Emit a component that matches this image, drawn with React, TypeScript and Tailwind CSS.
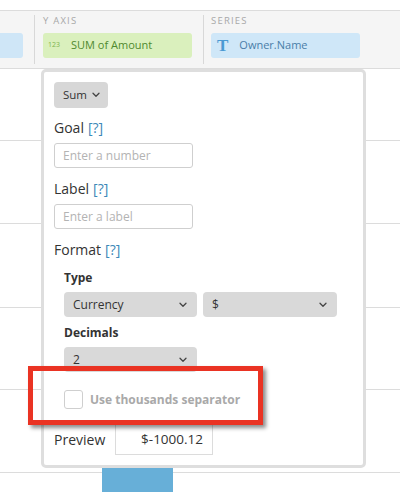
import React from "react";

const Chevron = ({ className = "" }: { className?: string }) => (
  <svg width="8" height="6" viewBox="0 0 8 6" className={className} fill="none">
    <path d="M1 1.3 L4 4.3 L7 1.3" stroke="#444" strokeWidth="1.3" strokeLinecap="round" strokeLinejoin="round" />
  </svg>
);

const Select = ({ label, w }: { label: string; w: string }) => (
  <div className={`${w} h-[25px] bg-[#d9d9d9] rounded-[4px] flex items-center justify-between pl-[9px] pr-[10px] text-[12px] text-[#333]`}>
    <span>{label}</span>
    <Chevron />
  </div>
);

const Help = () => <span className="text-[#3d88b8] ml-[4px]">[?]</span>;

export default function App() {
  return (
    <div
      className="relative w-[400px] h-[492px] overflow-hidden bg-white"
      style={{ fontFamily: '"Open Sans", "Liberation Sans", sans-serif' }}
    >
      <div className="h-[10px]" />
      {/* top bar */}
      <div className="h-[59px] border-t border-b border-[#dcdcdc] bg-[#f5f5f5] flex">
        <div className="w-[34px] pt-[22px]">
          <div className="w-[23px] h-[25px] bg-[#cfe6f7] rounded-r-[3px]" />
        </div>
        <div className="w-[169px] my-[4px] border-l border-[#d8d8d8] pl-[8px] flex flex-col">
          <div className="h-[12px] text-[9.5px] leading-[12px] tracking-[1.2px] text-[#a8a8a8]">Y AXIS</div>
          <div className="mt-[6px] w-[149px] h-[25px] bg-[#daf0bd] rounded-[3px] flex items-center">
            <span className="ml-[5px] text-[7px] text-[#7fb54f]">123</span>
            <span className="ml-[11px] text-[11px] text-[#4f8a2e]">SUM of Amount</span>
          </div>
        </div>
        <div className="flex-1 my-[4px] border-l border-[#d8d8d8] pl-[7px] flex flex-col">
          <div className="h-[12px] text-[9.5px] leading-[12px] tracking-[1.2px] text-[#a8a8a8]">SERIES</div>
          <div className="mt-[6px] w-[149px] h-[25px] bg-[#cfe7f8] rounded-[3px] flex items-center">
            <span
              className="ml-[6px] text-[17px] font-bold text-[#4a9ad3] leading-none"
              style={{ fontFamily: '"Liberation Serif", serif' }}
            >
              T
            </span>
            <span className="ml-[11px] text-[11px] text-[#4a7ea8]">Owner.Name</span>
          </div>
        </div>
      </div>
      {/* grid area */}
      <div className="flex flex-col">
        <div className="h-[72px] border-b border-[#dcdcdc]" />
        <div className="h-[83px] border-b border-[#dcdcdc]" />
        <div className="h-[84px] border-b border-[#dcdcdc]" />
        <div className="h-[82px] border-b border-[#dcdcdc]" />
        <div className="h-[83px] border-b border-[#dcdcdc]" />
        <div className="pl-[102px]">
          <div className="w-[71px] h-[30px] -mt-[6px] bg-[#67afd8]" />
        </div>
      </div>

      {/* popover */}
      <div className="absolute left-[41px] top-[69px] w-[325px] h-[399px] border-[3px] border-[#dedede] rounded-[5px] bg-white pl-[10px] pt-[10px] text-[#333]">
        <div className="w-[54px] h-[26px] bg-[#d7d7d7] rounded-[4px] flex items-center pl-[9px] gap-[5px] text-[11.5px] text-[#333]">
          <span>Sum</span>
          <Chevron />
        </div>
        <div className="mt-[10px] h-[20px] leading-[20px] text-[14px]">
          Goal<Help />
        </div>
        <div className="mt-[5px] w-[139px] h-[25px] border border-[#cfcfcf] rounded-[3px] flex items-center pl-[8px] text-[12px] text-[#b3b3b3]">
          Enter a number
        </div>
        <div className="mt-[11px] h-[20px] leading-[20px] text-[14px]">
          Label<Help />
        </div>
        <div className="mt-[5px] w-[139px] h-[25px] border border-[#cfcfcf] rounded-[3px] flex items-center pl-[8px] text-[12px] text-[#b3b3b3]">
          Enter a label
        </div>
        <div className="mt-[11px] h-[20px] leading-[20px] text-[14px]">
          Format<Help />
        </div>
        <div className="pl-[10px]">
          <div className="mt-[9px] h-[18px] leading-[18px] text-[12px] font-bold">Type</div>
          <div className="mt-[5px] flex gap-[6px]">
            <Select label="Currency" w="w-[133px]" />
            <Select label="$" w="w-[134px]" />
          </div>
          <div className="mt-[7px] h-[18px] leading-[18px] text-[12px] font-bold">Decimals</div>
          <div className="mt-[5px]">
            <Select label="2" w="w-[133px]" />
          </div>
          <div className="mt-[18px] flex items-center">
            <div className="w-[19px] h-[19px] border border-[#cfcfcf] rounded-[3px]" />
            <span className="ml-[7px] text-[12px] font-bold text-[#a9a9a9]">Use thousands separator</span>
          </div>
        </div>
        <div className="mt-[15px] flex items-center">
          <span className="text-[14px] w-[61px]">Preview</span>
          <div className="w-[98px] h-[31px] border border-[#dcdcdc] flex items-center justify-end pr-[9px] text-[13.5px]">
            $-1000.12
          </div>
        </div>
      </div>

      {/* red annotation */}
      <div className="absolute left-[28px] top-[366px] w-[235px] h-[59px] border-[5px] border-[#ea3323] shadow-[3px_3px_4px_rgba(0,0,0,0.45)]" />
    </div>
  );
}
